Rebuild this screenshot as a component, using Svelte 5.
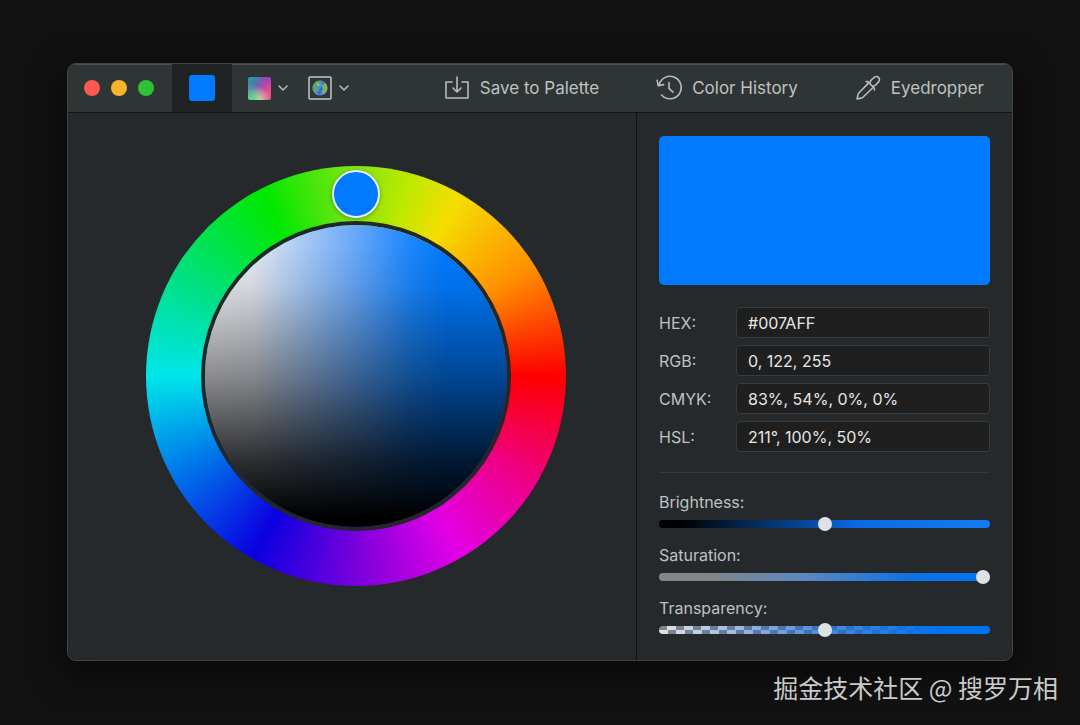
<script>
  let color = $state({
    hex: '#007AFF',
    rgb: '0, 122, 255',
    cmyk: '83%, 54%, 0%, 0%',
    hsl: '211°, 100%, 50%',
  })
  let brightness = $state(50)
  let saturation = $state(100)
  let transparency = $state(50)

  const fields = [
    { key: 'hex', label: 'HEX:' },
    { key: 'rgb', label: 'RGB:' },
    { key: 'cmyk', label: 'CMYK:' },
    { key: 'hsl', label: 'HSL:' },
  ]
</script>

{#snippet chevron()}
  <svg class="chevron" viewBox="0 0 10 10" aria-hidden="true">
    <path d="M1 3 L5 7 L9 3" />
  </svg>
{/snippet}

<main class="desktop">
  <section class="window">
    <header class="toolbar">
      <div class="lights">
        <button class="light close" aria-label="Close"></button>
        <button class="light minimize" aria-label="Minimize"></button>
        <button class="light zoom" aria-label="Zoom"></button>
      </div>

      <button class="tab" aria-label="Current color"><span class="swatch"></span></button>

      <div class="modes">
        <button class="mode" aria-label="Gradient">
          <span class="spectrum"></span>
          {@render chevron()}
        </button>
        <button class="mode" aria-label="Image">
          <svg class="globe" viewBox="0 0 24 24" aria-hidden="true">
            <defs>
              <clipPath id="ball"><circle cx="12" cy="12" r="7.6" /></clipPath>
            </defs>
            <rect class="frame" x="1" y="1" width="22" height="22" rx="1" />
            <g clip-path="url(#ball)">
              <rect x="4" y="4" width="16" height="16" fill="#4f8fd0" />
              <path d="M4 11 L8 5 L13 4 L12 8 L9 11 L10 15 L7 17 Z" fill="#58a86c" />
              <path d="M14 9 L18 7 L20 12 L17 18 L13 16 L15 13 Z" fill="#7cb45c" />
              <path d="M8 6 L12 9 L10 10 Z" fill="#a8d05c" />
              <path d="M9 17 L13 11 L15 12 L12 19 Z" fill="#3b64d8" />
              <path d="M13 5 L17 6 L15 9 Z" fill="#5468c0" />
            </g>
          </svg>
          {@render chevron()}
        </button>
      </div>

      <nav class="actions">
        <button class="action">
          <svg viewBox="0 0 26 26" aria-hidden="true">
            <path d="M8 7 H2 V23 H24 V7 H18" />
            <path d="M13 2 V17 M9 13 L13 17 L17 13" />
          </svg>
          Save to Palette
        </button>
        <button class="action">
          <svg viewBox="0 0 26 26" aria-hidden="true">
            <path d="M3 10.4 A11.2 11.2 0 1 1 5.6 20" />
            <path d="M1.2 5.4 L2.2 10.6 L7.6 9.6" />
            <path d="M13 7.6 V13.4 L17 17.2" />
          </svg>
          Color History
        </button>
        <button class="action">
          <svg viewBox="0 0 26 26" aria-hidden="true">
            <path d="M13 8.6 L4 17.8 Q2.8 19.2 2.8 21 L2 24 L5 23.4 Q6.8 23.4 8.2 22 L17.6 13" />
            <path d="M11.2 6.6 L12.8 6.6 L19.4 13.2 L19.4 15" />
            <path d="M14.4 8.2 L16.2 5 L19.4 2.2 Q21.6 0.8 23.6 2.4 Q25.2 4.4 23.8 6.6 L21 9.8 L17.8 11.6" />
          </svg>
          Eyedropper
        </button>
      </nav>
    </header>

    <div class="body">
      <div class="picker">
        <div class="wheel">
          <div class="disk"></div>
          <button class="handle" aria-label="Hue"></button>
        </div>
      </div>

      <aside class="panel">
        <div class="preview"></div>

        <div class="fields">
          {#each fields as field}
            <label for={field.key}>{field.label}</label>
            <input id={field.key} type="text" bind:value={color[field.key]} />
          {/each}
        </div>

        <hr />

        <div class="sliders">
          <div class="slider">
            <label for="brightness">Brightness:</label>
            <input id="brightness" class="brightness" type="range" bind:value={brightness} />
          </div>
          <div class="slider">
            <label for="saturation">Saturation:</label>
            <input id="saturation" class="saturation" type="range" bind:value={saturation} />
          </div>
          <div class="slider">
            <label for="transparency">Transparency:</label>
            <input id="transparency" class="transparency" type="range" bind:value={transparency} />
          </div>
        </div>
      </aside>
    </div>
  </section>

  <footer class="credit">掘金技术社区 @ 搜罗万相</footer>
</main>

<style>
  :global(body) {
    background: #121212;
  }

  .desktop {
    box-sizing: border-box;
    color: #bfc1c2;
    font-family: Inter, 'Liberation Sans', sans-serif;
    font-size: 16px;
    min-height: 100vh;
    padding: 63px 67px 0;
  }

  button {
    background: none;
    border: 0;
    color: inherit;
    cursor: pointer;
    font: inherit;
    padding: 0;
  }

  svg {
    fill: none;
    stroke: #b9bcbd;
    stroke-linecap: round;
    stroke-linejoin: round;
  }

  .window {
    background: #25292b;
    border: 1px solid #404446;
    border-radius: 9px;
    box-shadow: 0 10px 34px 6px rgba(0, 0, 0, 0.55);
    overflow: hidden;
  }

  .toolbar {
    align-items: stretch;
    background: #2f3435;
    border-bottom: 1px solid #111415;
    box-shadow: inset 0 1px #4a4e4f;
    display: flex;
    height: 48px;
  }

  .lights {
    align-items: center;
    display: flex;
    gap: 11px;
    padding: 0 18px 0 16px;
  }

  .light {
    border-radius: 50%;
    height: 16px;
    width: 16px;
  }

  .close {
    background: #fe5951;
  }

  .minimize {
    background: #f9b22d;
  }

  .zoom {
    background: #2bc235;
  }

  .tab {
    align-items: center;
    background: #1e2223;
    display: flex;
    justify-content: center;
    width: 60px;
  }

  .swatch {
    background: #007aff;
    border-radius: 3px;
    height: 26px;
    width: 26px;
  }

  .modes {
    display: flex;
    gap: 20px;
    padding-left: 16px;
  }

  .mode {
    align-items: center;
    display: flex;
    gap: 7px;
  }

  .spectrum {
    background:
      radial-gradient(circle at 0% 100%, #43e58c, transparent 55%),
      radial-gradient(circle at 45% 100%, #f5d8a0, transparent 50%),
      radial-gradient(circle at 100% 70%, #fb4f86, transparent 65%),
      radial-gradient(circle at 0% 0%, #1ba79a, transparent 60%),
      #8a3fc0;
    border-radius: 2px;
    height: 23px;
    width: 23px;
  }

  .globe {
    height: 24px;
    stroke: none;
    width: 24px;
  }

  .frame {
    stroke: #c4c6c7;
    stroke-width: 1.5;
  }

  .chevron {
    height: 10px;
    stroke-width: 1.5;
    width: 10px;
  }

  .actions {
    display: flex;
    font-size: 17px;
    gap: 57px;
    margin-left: auto;
    padding-right: 28px;
  }

  .action {
    align-items: center;
    display: flex;
    gap: 10px;
    white-space: nowrap;
  }

  .action svg {
    height: 26px;
    stroke-width: 1.6;
    width: 26px;
  }

  .body {
    display: grid;
    grid-template-columns: minmax(0, 1fr) 376px;
  }

  .picker {
    align-items: flex-start;
    display: flex;
    justify-content: center;
    padding: 53px 0 0 8px;
  }

  .wheel {
    background: conic-gradient(
      #84e414,
      #bce900 15deg,
      #f5dd00 30deg,
      #ff9000 58deg,
      #fd0000 90deg,
      #ee0088 122deg,
      #e200e6 150deg,
      #7a00dc 180deg,
      #0a00e0 210deg,
      #0078ea 242deg,
      #00e5ea 270deg,
      #00e080 300deg,
      #00e800 333deg,
      #84e414
    );
    border-radius: 50%;
    display: grid;
    height: 420px;
    place-items: center;
    position: relative;
    width: 420px;
  }

  .disk {
    background:
      linear-gradient(
        to bottom,
        transparent 6%,
        rgba(0, 0, 0, 0.08) 20%,
        rgba(0, 0, 0, 0.42) 50%,
        rgba(0, 0, 0, 0.8) 78%,
        #000 97%
      ),
      linear-gradient(to right, #f2f2f4, #e4e9f2 16%, #6eabf8 48%, #1c86fc 68%, #007aff 80%);
    border-radius: 50%;
    box-shadow: 0 0 0 4px #22272a;
    height: 302px;
    width: 302px;
  }

  .handle {
    background: #007aff;
    border: 2px solid #e9f5f0;
    border-radius: 50%;
    box-shadow: 0 1px 4px rgba(0, 0, 0, 0.35);
    height: 48px;
    left: 50%;
    position: absolute;
    top: 4px;
    transform: translateX(-50%);
    width: 48px;
  }

  .panel {
    border-left: 1px solid #111415;
    padding: 23px 22px;
  }

  .preview {
    background: #007aff;
    border-radius: 5px;
    height: 149px;
    margin-bottom: 22px;
  }

  .fields {
    align-items: center;
    display: grid;
    gap: 7px 0;
    grid-template-columns: 77px minmax(0, 1fr);
  }

  .fields input {
    background: #1f1f1f;
    border: 1px solid #393c3d;
    border-radius: 4px;
    box-sizing: border-box;
    color: #e6e6e6;
    font: inherit;
    height: 31px;
    min-width: 0;
    outline: none;
    padding: 0 11px;
  }

  hr {
    border: 0;
    border-top: 1px solid #35393b;
    margin: 20px 0 19px;
  }

  .sliders {
    display: grid;
    gap: 14px;
  }

  .slider {
    display: grid;
    gap: 5px;
  }

  .slider label {
    line-height: 20px;
  }

  input[type='range'] {
    appearance: none;
    background: none;
    height: 14px;
    margin: 0;
    width: 100%;
  }

  input[type='range']::-webkit-slider-runnable-track {
    background: var(--track);
    border-radius: 4px;
    height: 8px;
  }

  input[type='range']::-webkit-slider-thumb {
    appearance: none;
    background: #dfe2e5;
    border-radius: 50%;
    height: 14px;
    margin-top: -3px;
    width: 14px;
  }

  .brightness {
    --track: linear-gradient(to right, #000 6%, #064a9c 45%, #0a6ae6 60%, #157bf5);
  }

  .saturation {
    --track: linear-gradient(to right, #858585 12%, #5b87bf 45%, #0f72e6 75%, #0074f5);
  }

  .transparency {
    --track:
      linear-gradient(to right, transparent, rgba(28, 106, 212, 0.75) 50%, #0073f0 85%),
      repeating-conic-gradient(#e4e4e4 0 25%, #868686 0 50%) 0 0 / 17px 8px;
  }

  .credit {
    color: #cacaca;
    font-family: 'Noto Sans CJK SC', sans-serif;
    font-size: 25px;
    line-height: 36px;
    margin: 8px -45px 0 0;
    text-align: right;
  }
</style>
